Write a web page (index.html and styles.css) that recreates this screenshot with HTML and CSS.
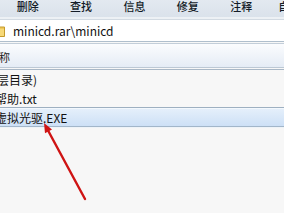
FILE: index.html
```html
<!DOCTYPE html>
<html>
<head>
<meta charset="utf-8">
<link rel="stylesheet" href="styles.css">
</head>
<body>
<div class="win">
  <div class="toolbar">
    <div class="tool">删除</div>
    <div class="tool">查找</div>
    <div class="tool">信息</div>
    <div class="tool">修复</div>
    <div class="tool">注释</div>
    <div class="tool">自解压</div>
  </div>
  <div class="address">
    <svg class="folder" width="16" height="13" viewBox="0 0 16 13">
      <path d="M0.5 1.5h5l1.5 1.5h8.5v9.5h-15z" fill="#f0c85a" stroke="#c49a2c"/>
      <path d="M1 5h14v7H1z" fill="#f7d978"/>
    </svg>
    <span class="path">minicd.rar\minicd</span>
  </div>
  <div class="header"><span class="col-name">名称</span></div>
  <div class="list">
    <div class="row"><span class="name name-up">(上层目录)</span></div>
    <div class="row row-short"><span class="name name-help">帮助.txt</span></div>
    <div class="row selected"><span class="name name-exe">虚拟光驱.EXE</span></div>
  </div>
  <svg class="arrow" width="284" height="213" viewBox="0 0 284 213">
    <line x1="85" y1="199" x2="47.5" y2="129.5" stroke="#cf1414" stroke-width="2.4" stroke-linecap="round"/>
    <polygon points="44,123 52,129.6 45,133.2" fill="#cf1414"/>
  </svg>
</div>
</body>
</html>
```

FILE: styles.css
```css
html, body {
  margin: 0;
  padding: 0;
}
body {
  width: 284px;
  height: 213px;
  overflow: hidden;
  background: #f7f7f7;
  font-family: "Noto Sans CJK SC", "Noto Sans", sans-serif;
  color: #1a1a1a;
}
.win {
  position: relative;
  height: 213px;
  overflow: hidden;
}
.toolbar {
  height: 17px;
  display: flex;
  padding-left: 1px;
  background: linear-gradient(#e3e9f0, #dae2eb);
  border-bottom: 2px solid #edf1f5;
  white-space: nowrap;
  overflow: hidden;
}
.tool {
  flex: none;
  width: 53.4px;
  text-align: center;
  font-size: 11px;
  line-height: 13px;
  font-weight: 500;
  color: #141c28;
}
.address {
  height: 21px;
  display: flex;
  align-items: center;
  background: #ffffff;
  border-top: 1px solid #d2dae2;
  border-bottom: 1px solid #b0bfcd;
  margin-bottom: 1px;
}
.folder {
  flex: none;
  margin-left: -11px;
}
.path {
  margin-left: 8px;
  font-size: 12px;
  line-height: 21px;
  color: #111111;
}
.header {
  height: 20px;
  display: flex;
  align-items: center;
  padding-top: 3px;
  box-sizing: border-box;
  background: linear-gradient(#fbfcfe, #e5ecf5);
  border-top: 1px solid #c3ced9;
  border-bottom: 1px solid #bcc8d4;
  box-sizing: content-box;
}
.col-name {
  margin-left: -12px;
  font-size: 11px;
  line-height: 14px;
}
.list {
  margin-top: 1px;
  border-top: 1px solid #a8b7c6;
}
.row {
  height: 19px;
  display: flex;
  align-items: center;
  font-size: 12px;
  line-height: 19px;
  white-space: nowrap;
  color: #111111;
}
.row-short {
  height: 18px;
}
.selected {
  height: 18px;
  background: linear-gradient(#e6f0fb, #cde0f6);
  border-top: 1px solid #9eb0c1;
  border-bottom: 1px solid #a2b6ca;
  box-shadow: inset 0 1px 0 #f3f8fd, 0 1px 0 #eef3f8;
}
.name-up {
  margin-left: -19px;
}
.name-help {
  margin-left: -5px;
}
.name-exe {
  margin-left: -5px;
}
.arrow {
  position: absolute;
  left: 0;
  top: 0;
}
```
